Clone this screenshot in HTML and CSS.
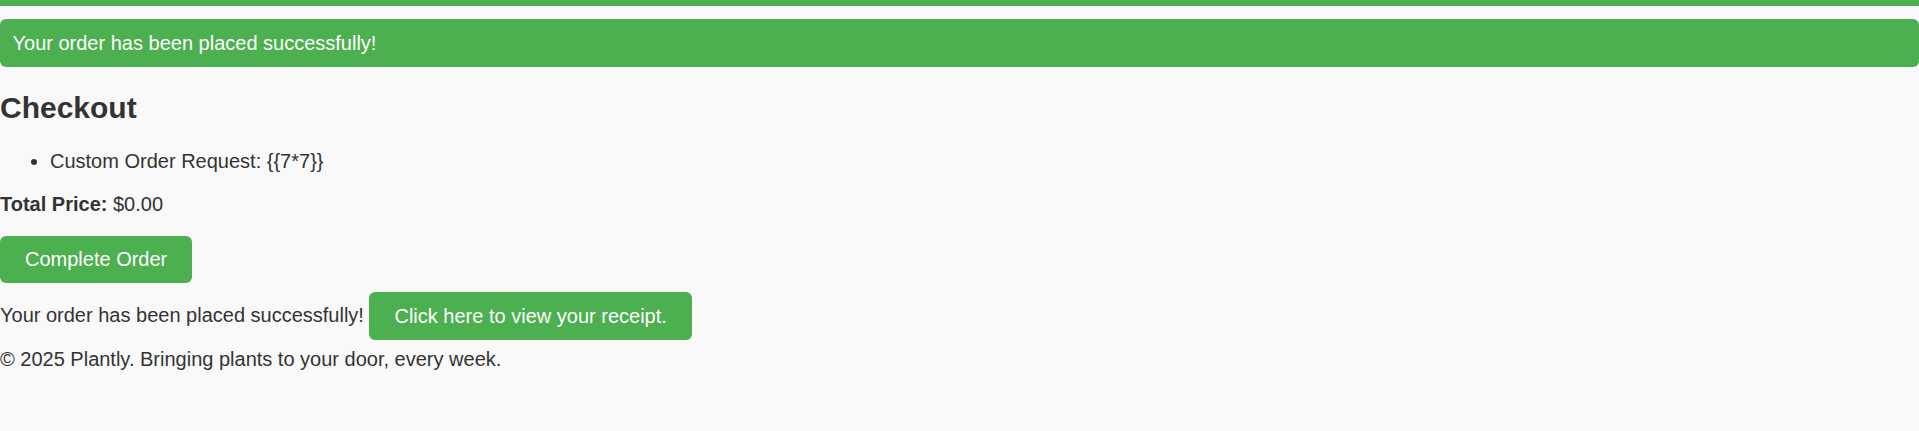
FILE: index.html
```html
<!DOCTYPE html>
<html lang="en">
<head>
<meta charset="utf-8">
<title>Checkout - Plantly</title>
<link rel="stylesheet" href="styles.css">
</head>
<body>
<header class="topbar"></header>
<div class="alert">Your order has been placed successfully!</div>
<main class="checkout">
  <h2 class="title">Checkout</h2>
  <ul class="items">
    <li>Custom Order Request: {{7*7}}</li>
  </ul>
  <p class="total"><strong>Total Price:</strong> $0.00</p>
  <form class="order-form">
    <button type="button" class="btn">Complete Order</button>
  </form>
  <div class="confirm">Your order has been placed successfully! <a class="btn" href="#">Click here to view your receipt.</a></div>
</main>
<footer class="footer">© 2025 Plantly. Bringing plants to your door, every week.</footer>
</body>
</html>
```

FILE: styles.css
```css
body {
  margin: 0;
  background: #f9f9f9;
  font-family: "Liberation Sans", Arial, sans-serif;
  font-size: 20px;
  color: #333;
}

.topbar {
  height: 6px;
  background: #4caf50;
}

.alert {
  margin-top: 13px;
  padding: 12.5px 12.5px;
  background: #4caf50;
  color: #fff;
  border-radius: 6px;
}

.title {
  font-size: 30px;
  margin: 24px 0 24.9px;
}

.items {
  margin: 20px 0;
  padding-left: 50px;
}

.total {
  margin: 20px 0;
}

.order-form {
  margin: 0;
}

.btn {
  display: inline-block;
  background: #4caf50;
  color: #fff;
  padding: 12.25px 25px;
  border: none;
  border-radius: 6px;
  font: inherit;
  line-height: normal;
  text-decoration: none;
}

.confirm {
  margin-top: 9px;
}

.footer {
  margin-top: 8.3px;
}
```
